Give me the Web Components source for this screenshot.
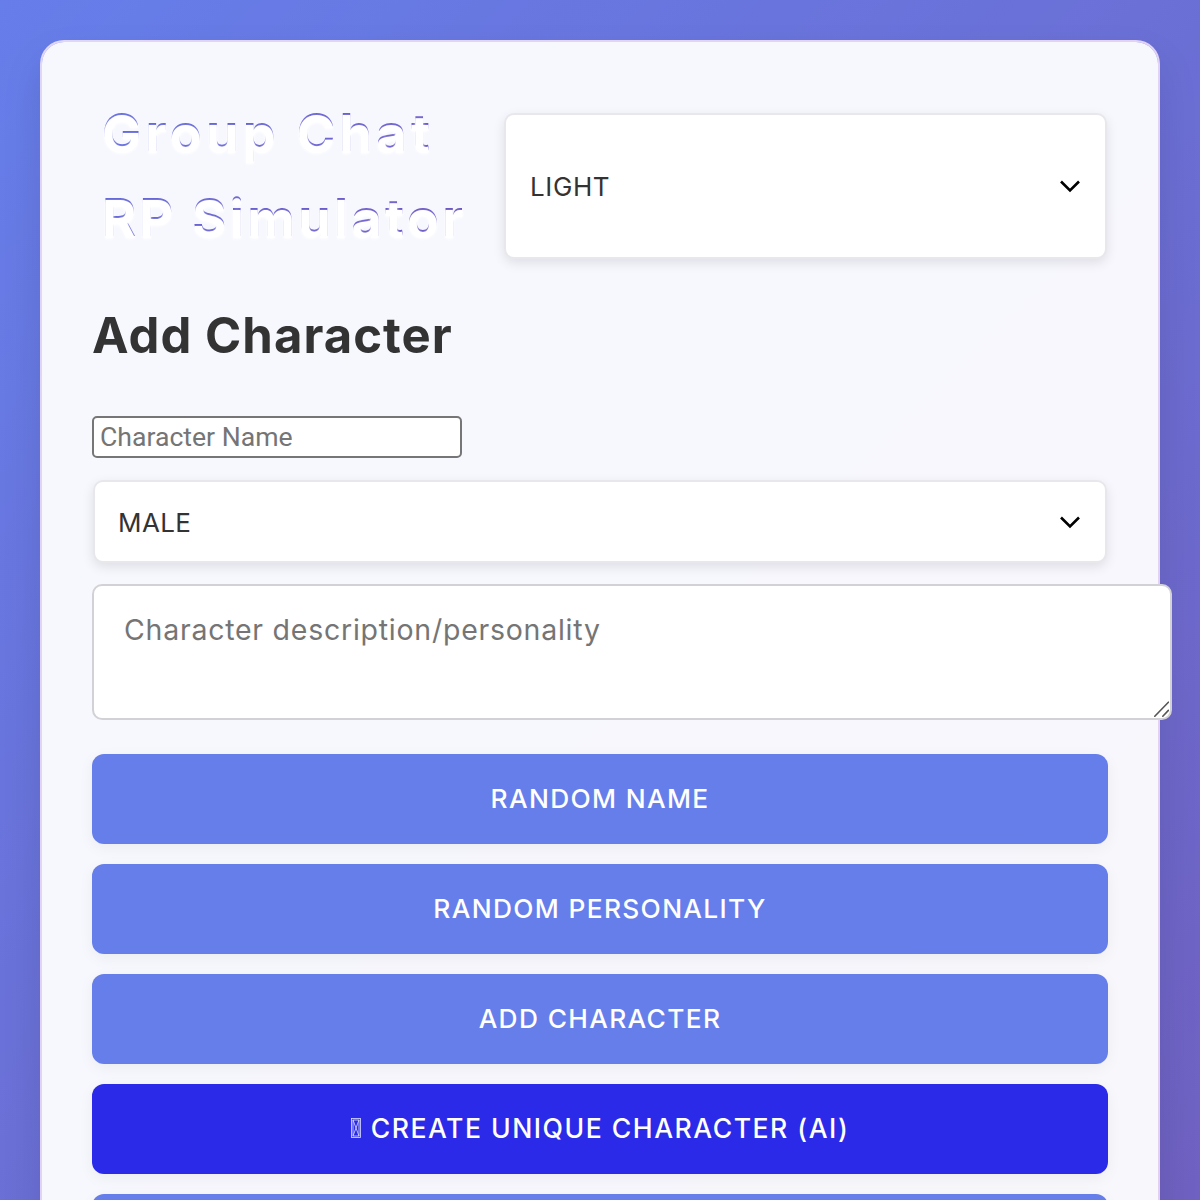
<!DOCTYPE html>
<html lang="en"><head><meta charset="utf-8"><title>Group Chat RP Simulator</title>
<style>
html{height:1200px;overflow:hidden;background:#667eea}
body{margin:0;height:1200px;overflow:hidden;padding:40px;box-sizing:border-box;font-family:Inter,"Liberation Sans",sans-serif;
background:linear-gradient(135deg,#667eea 0%,#764ba2 100%) 0 0/1200px 3000px no-repeat}
</style></head><body>
<gc-card>
  <gc-header>
    <gc-title><span slot="a">Group Chat</span><span slot="b">RP Simulator</span></gc-title>
    <gc-select tall>LIGHT</gc-select>
  </gc-header>
  <gc-heading>Add Character</gc-heading>
  <gc-input>Character Name</gc-input>
  <gc-select>MALE</gc-select>
  <gc-textarea>Character description/personality</gc-textarea>
  <gc-button>RANDOM NAME</gc-button>
  <gc-button>RANDOM PERSONALITY</gc-button>
  <gc-button>ADD CHARACTER</gc-button>
  <gc-button accent><svg slot="icon" width="10" height="20" viewBox="0 0 10 20" fill="none" stroke="#dfe0ff" stroke-width=".8"><rect x=".5" y=".5" width="9" height="19"/><rect x="2" y="2" width="6" height="16"/><path d="M2 2l6 16M8 2L2 18"/></svg>CREATE UNIQUE CHARACTER (AI)</gc-button>
  <gc-button></gc-button>
</gc-card>
<script>
function def(name,css,html,connected){
  customElements.define(name,class extends HTMLElement{
    constructor(){super();const r=this.attachShadow({mode:'open'});r.innerHTML='<style>'+css+'</style>'+html;}
    connectedCallback(){if(connected)connected.call(this);}
  });
}
def('gc-card',`:host{display:flex;flex-direction:column;box-sizing:border-box;min-height:1400px;padding:50px;border:2px solid rgba(255,236,252,.8);background-clip:padding-box;border-radius:24px;background-color:rgba(255,255,255,.95);box-shadow:0 20px 40px rgba(0,0,0,.1)}`,`<slot></slot>`);
def('gc-header',`:host{display:flex;align-items:flex-start;gap:42px;margin-top:-2px;margin-bottom:48px}`,`<slot></slot>`);
def('gc-title',`:host{display:block;flex:none;width:370px;padding-left:10px;box-sizing:border-box;font-size:52px;line-height:85px;font-weight:700;white-space:nowrap;
background:linear-gradient(135deg,#5f6be0,#6a4fc0);-webkit-background-clip:text;background-clip:text;color:transparent;text-shadow:0 2px 0 #fff,0 3px 3px #fff}
.a{letter-spacing:4.4px}.b{letter-spacing:3.4px}`,`<div class="a"><slot name="a"></slot></div><div class="b"><slot name="b"></slot></div>`);
def('gc-heading',`:host{display:block;font-size:49px;line-height:56px;font-weight:700;color:#333;letter-spacing:1.05px;margin-bottom:52px}`,`<slot></slot>`);
def('gc-input',`:host{display:block;box-sizing:border-box;width:370px;height:42px;border:2px solid #767676;border-radius:5px;background:#fff;padding:0 6px;font:26.6px/38px Roboto,sans-serif;color:#757575;margin-bottom:22px}`,`<slot></slot>`);
def('gc-select',`:host{display:flex;align-items:center;justify-content:space-between;flex:none;box-sizing:border-box;height:83px;padding:2px 24px 0 23px;border:2px solid #e8e8ec;border-radius:10px;background:#fff;box-shadow:0 4px 12px rgba(0,0,0,.1);font-size:26px;letter-spacing:.4px;color:#333;margin:0 1px 21px}
:host([tall]){flex:1;height:146px;padding:0 24px;letter-spacing:.6px;margin:23px 1px 0 0}
svg{width:22px;height:13px;flex:none}`,`<slot></slot><svg viewBox="0 0 22 13"><path d="M2 1.5l9 9 9-9" fill="none" stroke="#000" stroke-width="2.6"/></svg>`);
def('gc-textarea',`:host{display:block;position:relative;width:1080px;height:136px;margin-bottom:34px}
textarea{display:block;box-sizing:border-box;width:100%;height:100%;padding:26px 30px;border:2px solid #d2d2d6;border-radius:10px;background:#fff;font:28.5px/36px Inter,sans-serif;letter-spacing:.75px;color:#757575;outline:none;resize:none;overflow:hidden}
svg{position:absolute;right:3px;bottom:3px;width:15px;height:16px}`,`<svg viewBox="0 0 15 16" fill="none" stroke="#555" stroke-width="1.6" stroke-linecap="round"><path d="M.8 15.2L14.4 1.2M8.8 15.2l5.6-5.8"/></svg>`,function(){
  const t=document.createElement('textarea');t.textContent=this.textContent.trim();this.textContent='';this.shadowRoot.prepend(t);
});
def('gc-button',`:host{display:flex;align-items:center;justify-content:center;gap:10px;flex:none;box-sizing:border-box;height:90px;padding-bottom:2px;margin-bottom:20px;border-radius:12px;background:#667eea;color:#fff;font-size:26.3px;font-weight:500;letter-spacing:1.35px;box-shadow:0 4px 15px rgba(0,0,0,.05)}
:host([accent]){background:#2a2ae8;font-size:26.6px;letter-spacing:1.5px}`,`<slot name="icon"></slot><slot></slot>`);
</script>
</body></html>
